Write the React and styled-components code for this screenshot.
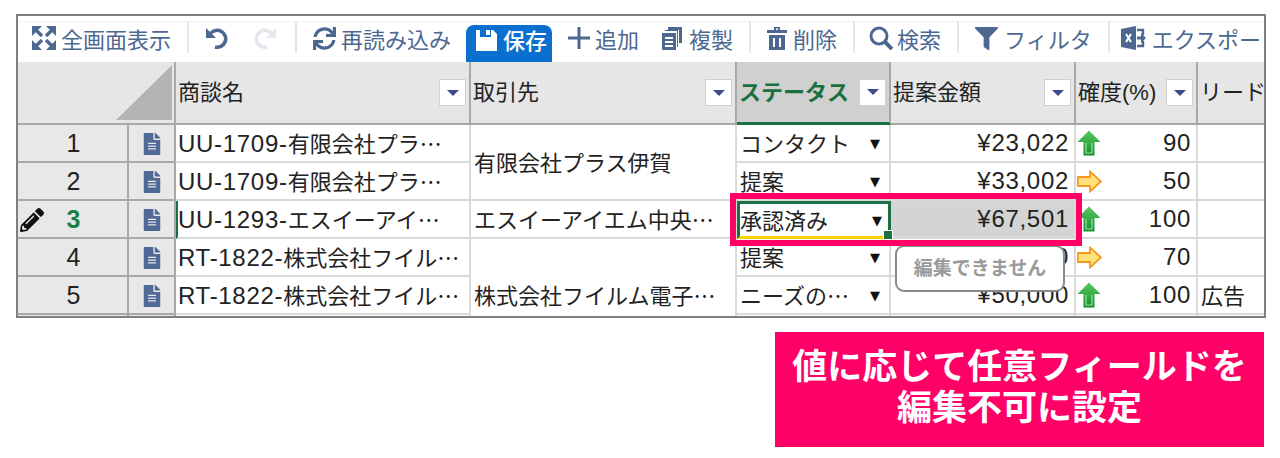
import React from 'react'
import styled, { createGlobalStyle } from 'styled-components'
import { FaFileAlt, FaFilter, FaPencilAlt, FaSync } from 'react-icons/fa'

const Global = createGlobalStyle`
    body {
        margin: 0;
        background: white;
        font-family: "Liberation Sans", "Noto Sans CJK JP", sans-serif;
        font-size: 22px;
        color: #222;
    }
`

const Page = styled.div`
    width: 1280px;
    height: 458px;
    box-sizing: border-box;
    padding: 14px 16px 0 16px;
    overflow: hidden;
`

const Frame = styled.div`
    width: 1250px;
    height: 304px;
    box-sizing: border-box;
    border: 2px solid #808080;
    overflow: hidden;
`

const Toolbar = styled.div`
    height: 46px;
    box-sizing: border-box;
    padding-top: 5px;
    background: white;
`

const ToolRow = styled.div`
    height: 41px;
    box-sizing: border-box;
    border-top: 1px solid #eef1f5;
    padding-left: 14px;
    display: flex;
    gap: 16px;
    white-space: nowrap;
    overflow: hidden;
`

const Tool = styled.div`
    display: flex;
    align-items: center;
    gap: ${(p) => (p.$gap === undefined ? 5 : p.$gap)}px;
    height: 32px;
    margin-left: ${(p) => p.$extra || 0}px;
    color: #4c6891;
    flex-shrink: 0;
`

const SaveTool = styled(Tool)`
    height: 37px;
    width: 86px;
    box-sizing: border-box;
    margin-top: 3px;
    padding: 0 0 6px 9px;
    background: #0b6fcf;
    border-radius: 8px 8px 0 0;
    color: white;
    font-weight: 500;
`

const SaveLabel = styled.span`
    padding-bottom: 4px;
`

const Sep = styled.div`
    width: 2px;
    height: 31px;
    margin-left: ${(p) => p.$extra || 0}px;
    background: #e2e7ee;
    flex-shrink: 0;
`

const TableWrap = styled.div`
    position: relative;
`

const Grid = styled.div`
    display: grid;
    grid-template-columns: 111px 47px 295px 266px 154px 185px 122px 66px;
    grid-template-rows: 63px repeat(6, 38px);
`

const HeadCell = styled.div`
    box-sizing: border-box;
    display: flex;
    align-items: center;
    justify-content: space-between;
    padding: 0 3px 0 2px;
    background: ${(p) => (p.$active ? '#d0d0d0' : '#e6e6e6')};
    color: ${(p) => (p.$active ? '#1a7040' : '#222')};
    font-weight: ${(p) => (p.$active ? 700 : 400)};
    border-right: ${(p) => (p.$last ? 'none' : '2px solid #a8a8a8')};
    border-bottom: ${(p) => (p.$active ? '3px solid #1a7040' : '2px solid #a8a8a8')};
    white-space: nowrap;
    overflow: hidden;
`

const HeadLabel = styled.span`
    padding-bottom: 5px;
`

const Corner = styled.div`
    grid-column: span 2;
    box-sizing: border-box;
    display: flex;
    justify-content: flex-end;
    align-items: flex-end;
    padding: 0 2px 3px 0;
    background: #e6e6e6;
    border-right: 2px solid #a8a8a8;
    border-bottom: 2px solid #a8a8a8;
`

const CornerMark = styled.div`
    width: 56px;
    height: 55px;
    background: #b4b4b4;
    clip-path: polygon(100% 0, 100% 100%, 0 100%);
`

const SortButton = styled.div`
    width: 27px;
    height: 27px;
    box-sizing: border-box;
    flex-shrink: 0;
    display: flex;
    align-items: center;
    justify-content: center;
    background: white;
    border: 1px solid #d0d0d0;

    &::after {
        content: '';
        border-left: 6px solid transparent;
        border-right: 6px solid transparent;
        border-top: 6px solid #3d4b8c;
    }
`

const RowNum = styled.div`
    position: relative;
    box-sizing: border-box;
    display: flex;
    align-items: center;
    justify-content: center;
    padding-left: 2px;
    background: #e8e8e8;
    border-right: 2px solid #a8a8a8;
    border-bottom: 2px solid #a8a8a8;
    font-size: 25px;
    color: ${(p) => (p.$active ? '#1d7f48' : '#222')};
    font-weight: ${(p) => (p.$active ? 700 : 400)};
`

const Pencil = styled.div`
    position: absolute;
    left: 2px;
    top: 7px;
    display: flex;
    color: #111;
`

const DocCell = styled.div`
    box-sizing: border-box;
    display: flex;
    align-items: center;
    justify-content: center;
    padding-top: 2px;
    background: #e8e8e8;
    border-right: 2px solid #a8a8a8;
    border-bottom: 2px solid #a8a8a8;
    color: #4f6a96;
`

const Cell = styled.div`
    box-sizing: border-box;
    display: flex;
    align-items: center;
    justify-content: ${(p) => p.$justify || 'flex-start'};
    padding: ${(p) => p.$pad || '0 2px'};
    grid-row: span ${(p) => p.$span || 1};
    background: ${(p) => p.$bg || 'white'};
    border-right: ${(p) => (p.$last ? 'none' : '2px solid #d9d9d9')};
    border-bottom: 2px solid #d9d9d9;
    border-left: ${(p) => (p.$mark ? '2px solid #1a7040' : 'none')};
    white-space: nowrap;
    overflow: hidden;
`

const SelectCell = styled(Cell)`
    padding: 0 9px 0 3px;
    justify-content: space-between;
    ${(p) => p.$selected && `
        border: 3px solid #1a7040;
        border-bottom-color: #ffd000;
        padding: 0 6px 0 0;
        overflow: visible;
        position: relative;
    `}
`

const Handle = styled.div`
    position: absolute;
    right: -5px;
    bottom: -4px;
    width: 8px;
    height: 8px;
    background: #1a7040;
    border: 1px solid white;
`

const Text = styled.span`
    padding-bottom: 3px;
`

const Caret = styled.span`
    font-family: "DejaVu Sans", sans-serif;
    font-size: 13px;
    color: #111;
`

const Latin = styled.span`
    font-size: 24px;
    letter-spacing: 0.7px;
`

const Dots = styled.span`
    font-family: "Noto Sans CJK JP", sans-serif;
`

const Highlight = styled.div`
    position: absolute;
    left: 712px;
    top: 131px;
    width: 352px;
    height: 53px;
    box-sizing: border-box;
    border: 6px solid #ff0066;
`

const Tip = styled.div`
    position: absolute;
    left: 877px;
    top: 183px;
    width: 170px;
    height: 47px;
    box-sizing: border-box;
    display: flex;
    align-items: center;
    justify-content: center;
    padding-bottom: 4px;
    background: white;
    border: 2px solid #8a8a8a;
    border-radius: 9px;
    color: #999;
    font-size: 19px;
    font-weight: 700;
    white-space: nowrap;
`

const Callout = styled.div`
    width: 489px;
    height: 115px;
    margin: 14px 0 0 759px;
    padding-bottom: 12px;
    box-sizing: border-box;
    display: flex;
    flex-direction: column;
    align-items: center;
    justify-content: center;
    background: #ff0066;
    color: white;
    font-family: "Noto Sans CJK JP", sans-serif;
    font-size: 35px;
    font-weight: 700;
    line-height: 41px;
`

const Flip = styled.svg`
    transform: ${(p) => (p.$flip ? 'scaleX(-1)' : 'none')};
    flex-shrink: 0;
`

const Expand = () => (
  <Flip width="24" height="24" viewBox="0 0 24 24" fill="currentColor" stroke="currentColor">
    {[0, 90, 180, 270].map((r) => (
      <g key={r} transform={`rotate(${r} 12 12)`}>
        <polygon points="0,0 10,0 0,10" stroke="none" />
        <line x1="4" y1="4" x2="10" y2="10" strokeWidth="3.4" />
      </g>
    ))}
  </Flip>
)

const Undo = ({ flip, color }) => (
  <Flip $flip={flip} width="24" height="24" viewBox="0 0 24 24" style={{ color }}>
    <path d="M6.5 7.5 A8.5 8.5 0 1 1 11 21" fill="none" stroke="currentColor" strokeWidth="3.6" />
    <polygon points="2,2 2,12 12,12" fill="currentColor" />
  </Flip>
)

const Floppy = () => (
  <Flip width="23" height="23" viewBox="0 0 23 23">
    <path fillRule="evenodd" fill="white" d="M1 1h4v7h11V1h2l4 4v17H1z" />
    <rect x="11" y="1" width="4" height="5" fill="white" />
  </Flip>
)

const Plus = () => (
  <Flip width="22" height="22" viewBox="0 0 22 22">
    <path d="M11 0v22M0 11h22" stroke="currentColor" strokeWidth="3" />
  </Flip>
)

const Copy = () => (
  <Flip width="21" height="23" viewBox="0 0 21 23" fill="currentColor">
    <path fillRule="evenodd" d="M1 6h14v17H2a1 1 0 0 1-1-1zM4 10v2h8v-2zM4 14v2h8v-2zM4 18v2h8v-2z" />
    <path d="M4 3h13v17h-1V4H4z" />
    <path d="M7 0h14v16h-3V3H7z" />
  </Flip>
)

const Trash = () => (
  <Flip width="20" height="23" viewBox="0 0 20 23" fill="currentColor">
    <path fillRule="evenodd" d="M7 0h6v3h7v3H0V3h7zM9 1.500v1.500h2V1.500z" />
    <path fillRule="evenodd" d="M2 8h16v15H2zM6 11v9h2v-9zM12 11v9h2v-9z" />
  </Flip>
)

const Search = () => (
  <Flip width="24" height="24" viewBox="0 0 24 24" fill="none" stroke="currentColor">
    <circle cx="10" cy="10" r="8" strokeWidth="3" />
    <line x1="15.500" y1="15.500" x2="23" y2="23" strokeWidth="4" />
  </Flip>
)

const Excel = () => (
  <Flip width="25" height="24" viewBox="0 0 25 24">
    <path d="M0 3 15 0v24L0 21z" fill="currentColor" />
    <path d="M5 8l5 8M10 8l-5 8" stroke="white" strokeWidth="2" />
    <path d="M16 4h6v5M22 15v5h-6" fill="none" stroke="currentColor" strokeWidth="2.400" />
    <path d="M16 10.500h4V7l5 5-5 5v-3.500h-4z" fill="currentColor" />
  </Flip>
)

const UpArrow = () => (
  <Flip width="24" height="26" viewBox="0 0 24 26">
    <defs>
      <linearGradient id="up" x1="0" y1="0" x2="0" y2="1">
        <stop offset="0" stopColor="#58c860" />
        <stop offset="1" stopColor="#12902f" />
      </linearGradient>
    </defs>
    <path d="M12 0.500 23.500 12H17.500V25.500H6.500V12H0.500z" fill="url(#up)" />
    <path d="M9 13V23H15V13" fill="none" stroke="#8fe09a" strokeWidth="1.200" />
  </Flip>
)

const SideArrow = () => (
  <Flip width="25" height="23" viewBox="0 0 25 23">
    <path d="M1 7H13V1.500L24 11.500 13 21.500V16H1z" fill="#ffe27a" stroke="#f7981f" strokeWidth="1.800" />
  </Flip>
)

const Code = ({ code, rest }) => (
  <Text>
    <Latin>{code}</Latin>
    {rest}
    <Dots>…</Dots>
  </Text>
)

const rows = [
  { code: 'UU-1709-', name: '有限会社プラ', status: 'コンタクト', amount: '¥23,022', up: true, pct: 90 },
  { code: 'UU-1709-', name: '有限会社プラ', status: '提案', amount: '¥33,002', up: false, pct: 50 },
  { code: 'UU-1293-', name: 'エスイーアイ', status: '承認済み', amount: '¥67,501', up: true, pct: 100, active: true },
  { code: 'RT-1822-', name: '株式会社フイル', status: '提案', amount: '¥45,000', up: false, pct: 70 },
  { code: 'RT-1822-', name: '株式会社フイル', status: 'ニーズの', dots: true, amount: '¥50,000', up: true, pct: 100, lead: '広告' },
]

const clients = {
  0: { span: 2, label: '有限会社プラス伊賀' },
  2: { span: 1, label: 'エスイーアイエム中央', dots: true },
  3: { span: 3, label: '株式会社フイルム電子', dots: true },
}

const heads = [
  { label: '商談名' },
  { label: '取引先' },
  { label: 'ステータス', active: true },
  { label: '提案金額' },
  { label: '確度(%)' },
]

const App = () => {
  return (
    <Page>
      <Global />
      <Frame>
        <Toolbar>
          <ToolRow>
            <Tool><Expand />全画面表示</Tool>
            <Sep />
            <Tool $extra={-1}><Undo /></Tool>
            <Tool $extra={10}><Undo flip color="#e3e8ef" /></Tool>
            <Sep $extra={1} />
            <Tool><FaSync size={23} />再読み込み</Tool>
            <SaveTool $extra={-1}><Floppy /><SaveLabel>保存</SaveLabel></SaveTool>
            <Tool><Plus />追加</Tool>
            <Tool $extra={6} $gap={7}><Copy />複製</Tool>
            <Sep />
            <Tool $gap={6}><Trash />削除</Tool>
            <Sep />
            <Tool $extra={-2} $gap={4}><Search />検索</Tool>
            <Sep />
            <Tool $gap={6}><FaFilter size={23} />フィルタ</Tool>
            <Sep />
            <Tool $extra={-5} $gap={6}><Excel />エクスポート</Tool>
          </ToolRow>
        </Toolbar>
        <TableWrap>
          <Grid>
            <Corner><CornerMark /></Corner>
            {heads.map((h, i) => (
              <HeadCell key={i} $active={h.active}>
                <HeadLabel>{h.label}</HeadLabel>
                <SortButton />
              </HeadCell>
            ))}
            <HeadCell $last>
              <HeadLabel>リード</HeadLabel>
            </HeadCell>

            {rows.map((r, i) => (
              <React.Fragment key={i}>
                <RowNum $active={r.active}>
                  {r.active && <Pencil><FaPencilAlt size={24} /></Pencil>}
                  {i + 1}
                </RowNum>
                <DocCell><FaFileAlt size={22} /></DocCell>
                <Cell $mark={r.active} $pad={r.active ? '0 2px 0 0' : undefined}>
                  <Code code={r.code} rest={r.name} />
                </Cell>
                {clients[i] && (
                  <Cell $span={clients[i].span} $pad="0 3px">
                    <Text>{clients[i].label}{clients[i].dots && <Dots>…</Dots>}</Text>
                  </Cell>
                )}
                <SelectCell $selected={r.active}>
                  <Text>{r.status}{r.dots && <Dots>…</Dots>}</Text>
                  <Caret>▼</Caret>
                  {r.active && <Handle />}
                </SelectCell>
                <Cell $justify="flex-end" $pad="0 5px 0 0" $bg={r.active ? '#d4d4d4' : undefined}>
                  <Latin>{r.amount}</Latin>
                </Cell>
                <Cell $justify="space-between" $pad="0 5px 0 1px">
                  {r.up ? <UpArrow /> : <SideArrow />}
                  <Latin>{r.pct}</Latin>
                </Cell>
                <Cell $pad="0 0 0 3px" $last>
                  <Text>{r.lead}</Text>
                </Cell>
              </React.Fragment>
            ))}

            <RowNum />
            <DocCell />
            <Cell />
            <SelectCell />
            <Cell />
            <Cell />
            <Cell $last />
          </Grid>
          <Tip>編集できません</Tip>
          <Highlight />
        </TableWrap>
      </Frame>
      <Callout>
        <div>値に応じて任意フィールドを</div>
        <div>編集不可に設定</div>
      </Callout>
    </Page>
  )
}

export default App
